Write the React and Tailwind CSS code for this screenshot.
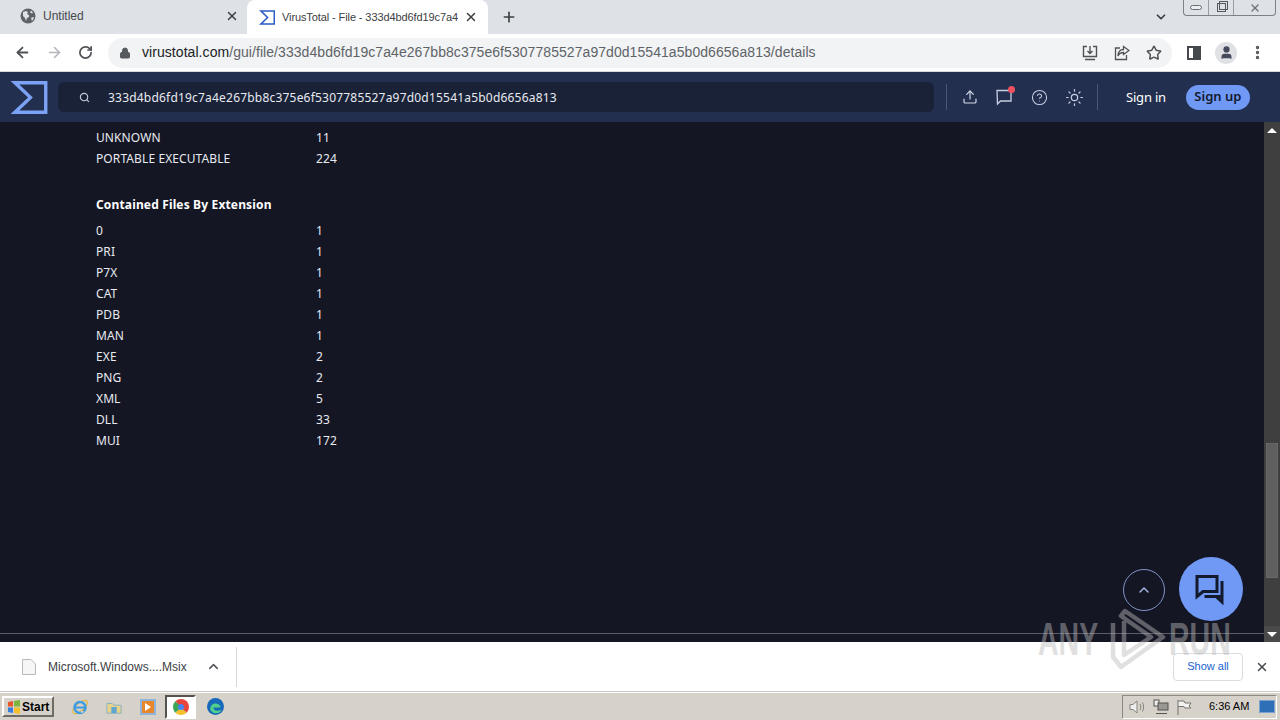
import { ArrowLeft, ArrowRight, RotateCw, Lock, Search, Upload, HelpCircle, Sun, ChevronUp, ChevronDown, X, Plus, Star, EllipsisVertical, User } from 'lucide-react'

const types = [['UNKNOWN', '11'], ['PORTABLE EXECUTABLE', '224']]
const extensions = [
  ['0', '1'], ['PRI', '1'], ['P7X', '1'], ['CAT', '1'], ['PDB', '1'], ['MAN', '1'],
  ['EXE', '2'], ['PNG', '2'], ['XML', '5'], ['DLL', '33'], ['MUI', '172'],
]

function Sigma({ className, color = '#7ba2f5' }) {
  return (
    <svg viewBox="0 0 38 34" className={className} fill={color}>
      <path fillRule="evenodd" d="M0 0H38V34H0L18 17zM9 3.500L23 17 9 30.500H34.500V3.500z" />
    </svg>
  )
}

function Row({ label, value }) {
  return (
    <div className="flex h-[21px] items-center text-[12px] tracking-[0.1px] text-[#e8eaf0]">
      <div className="w-[220px]">{label}</div>
      <div>{value}</div>
    </div>
  )
}

function TabBar() {
  return (
    <div className="relative flex h-[34px] items-end bg-[#dee1e6] pl-2 font-['Liberation_Sans',sans-serif] text-[12px] text-[#3c4043]">
      <div className="mb-[3px] flex h-[30px] w-[239px] items-center pl-3 pr-2">
        <svg viewBox="0 0 16 16" className="h-4 w-4">
          <circle cx="8" cy="8" r="7.500" fill="#5f6368" />
          <path d="M3 4l3-1 2 1-1 2 2 1v2l-2 1-1 3-1-3-2-2zM11 2.500l2 2-1 1-2-1zM11 10l2-1 1 1-2 3z" fill="#dee1e6" />
        </svg>
        <span className="ml-[7px] flex-1 text-[#45494d]">Untitled</span>
        <X className="h-[14px] w-[14px] text-[#3c4043]" strokeWidth={2.5} />
      </div>
      <div className="flex h-[34px] w-[241px] items-center rounded-t-lg bg-white pl-3">
        <Sigma className="h-[15px] w-[16px] shrink-0" color="#2a5bc8" />
        <span className="ml-[7px] w-[176px] overflow-hidden whitespace-nowrap text-[11px] tracking-[-0.1px] text-[#3c4043]">VirusTotal - File - 333d4bd6fd19c7a4</span>
        <X className="ml-[6px] h-[14px] w-[14px] shrink-0 text-[#3c4043]" strokeWidth={2.5} />
      </div>
      <Plus className="mb-[9px] ml-[13px] h-[16px] w-[16px] text-[#3c4043]" strokeWidth={2.5} />
      <ChevronDown className="absolute right-[112px] top-[10px] h-[14px] w-[14px] text-[#3c4043]" strokeWidth={3} />
      <div className="absolute right-[4px] top-0 flex h-[16px] w-[93px] rounded-b-[4px] border border-t-0 border-[#7d8087] bg-[#dee1e6]">
        <div className="flex w-[25px] items-center justify-center border-r border-[#9a9da3]">
          <div className="h-[5px] w-[12px] rounded-sm border border-[#6b6e73] bg-[#eceef1]" />
        </div>
        <div className="flex w-[25px] items-center justify-center border-r border-[#9a9da3]">
          <div className="relative h-[9px] w-[9px] border border-[#55585d]">
            <div className="absolute -right-[3px] -top-[3px] h-[9px] w-[9px] border border-[#55585d]" />
          </div>
        </div>
        <div className="flex flex-1 items-center justify-center">
          <X className="h-[12px] w-[12px] text-[#6b6e73]" strokeWidth={2.5} />
        </div>
      </div>
    </div>
  )
}

function Toolbar() {
  return (
    <div className="flex h-[38px] items-center border-b border-[#d5d7db] bg-white pl-[14px]">
      <ArrowLeft className="h-[17px] w-[17px] text-[#4f5256]" strokeWidth={2.5} />
      <ArrowRight className="ml-[15px] h-[17px] w-[17px] text-[#b4b6ba]" strokeWidth={2.25} />
      <RotateCw className="ml-[15px] h-[15px] w-[15px] text-[#4f5256]" strokeWidth={2.75} />
      <div className="ml-[15px] flex h-[30px] w-[1064px] items-center rounded-full bg-[#f1f3f4] pl-[11px] pr-[10px]">
        <Lock className="h-[12px] w-[12px] fill-[#55585d] text-[#55585d]" />
        <span className="ml-[11px] font-['Liberation_Sans',sans-serif] text-[14px] tracking-[0.06px] text-[#5f6368]">
          <span className="text-[#202124]">virustotal.com</span>/gui/file/333d4bd6fd19c7a4e267bb8c375e6f5307785527a97d0d15541a5b0d6656a813/details
        </span>
        <div className="ml-auto flex items-center gap-[16px] text-[#4f5256]">
          <svg viewBox="0 0 16 16" className="h-4 w-4" fill="none" stroke="currentColor" strokeWidth="1.4">
            <path d="M5 1.500H1.500v10h13v-10H11M8 1v7M5.500 6L8 8.500 10.500 6M3 14.500h10" />
          </svg>
          <svg viewBox="0 0 16 16" className="h-4 w-4" fill="none" stroke="currentColor" strokeWidth="1.3">
            <path d="M6 3H1.500v11.500h11V10M9.500 1.500L15 5.500 9.500 9.500V7.500C7 7.500 5 8.500 4 11c0-4 2-6.500 5.500-6.500z" />
          </svg>
          <Star className="h-4 w-4" strokeWidth={2.25} />
        </div>
      </div>
      <div className="ml-[15px] flex h-[14px] w-[14px] justify-end border-2 border-[#45484c] bg-white">
        <div className="h-full w-[6px] bg-[#45484c]" />
      </div>
      <div className="ml-[14px] flex h-[22px] w-[22px] items-center justify-center rounded-full bg-[#dfe1e5]">
        <User className="h-[15px] w-[15px] fill-[#45495c] text-[#45495c]" />
      </div>
      <EllipsisVertical className="ml-[12px] h-[17px] w-[17px] text-[#4f5256]" strokeWidth={2.75} />
    </div>
  )
}

function SiteHeader() {
  return (
    <div className="flex h-[50px] items-center bg-[#222f4f] pl-[10px] font-['Noto_Sans',sans-serif]">
      <Sigma className="h-[33px] w-[38px] shrink-0" />
      <div className="ml-[10px] flex h-[30px] w-[876px] items-center rounded-md bg-[#1a2238] pl-[21px]">
        <Search className="h-[11px] w-[11px] text-[#c4cbdb]" strokeWidth={2.5} />
        <span className="ml-[18px] mt-[2px] text-[12px] tracking-[0.2px] text-[#e8eaf0]">333d4bd6fd19c7a4e267bb8c375e6f5307785527a97d0d15541a5b0d6656a813</span>
      </div>
      <div className="ml-[12px] h-[26px] w-px bg-[#4a5877]" />
      <Upload className="ml-[15px] h-[16px] w-[16px] text-[#d5daea]" strokeWidth={1.75} />
      <div className="relative ml-[18px]">
        <svg viewBox="0 0 18 18" className="h-[18px] w-[18px]" fill="none" stroke="#c7cee0" strokeWidth="1.3">
          <path d="M1 2.500H15V13H4.500L1.500 16z" />
        </svg>
        <div className="absolute -right-[1px] -top-[2px] h-[7px] w-[7px] rounded-full bg-[#f05060]" />
      </div>
      <HelpCircle className="ml-[17px] h-[17px] w-[17px] text-[#c7cee0]" strokeWidth={1.5} />
      <Sun className="ml-[17px] h-[19px] w-[19px] text-[#c7cee0]" strokeWidth={1.5} />
      <div className="ml-[13px] h-[26px] w-px bg-[#4a5877]" />
      <span className="ml-[28px] mt-[2px] text-[13px] tracking-[-0.2px] text-white">Sign in</span>
      <div className="ml-[20px] flex h-[25px] w-[64px] items-center justify-center rounded-full bg-[#7099f5] text-[13px] font-semibold text-[#141a2e]">
        Sign up
      </div>
    </div>
  )
}

function Scrollbar() {
  return (
    <div className="flex w-[16px] shrink-0 flex-col bg-[#3f3f3f]">
      <div className="flex h-[16px] items-center justify-center">
        <div className="h-0 w-0 border-x-[5px] border-b-[5px] border-x-transparent border-b-white" />
      </div>
      <div className="mx-auto mt-[305px] h-[135px] w-[12px] border border-[#686868] bg-[#5f5f5f]" />
      <div className="mt-auto flex h-[16px] items-center justify-center bg-[#4a4a4a]">
        <div className="h-0 w-0 border-x-[5px] border-t-[5px] border-x-transparent border-t-white" />
      </div>
    </div>
  )
}

function Content() {
  return (
    <div className="relative flex min-h-0 flex-1 bg-[#141624] font-['Noto_Sans',sans-serif]">
      <div className="flex flex-1 flex-col">
        <div className="flex-1 pl-[96px] pt-[5px]">
          {types.map(([l, v]) => <Row key={l} label={l} value={v} />)}
          <div className="mb-[5px] mt-[25px] flex h-[21px] items-center text-[12px] font-bold tracking-[0.15px] text-white">Contained Files By Extension</div>
          {extensions.map(([l, v]) => <Row key={l} label={l} value={v} />)}
        </div>
        <div className="mb-[8px] h-px bg-[#5a5c66]" />
      </div>
      <Scrollbar />
      <div className="absolute left-[1123px] top-[447px] flex h-[42px] w-[42px] items-center justify-center rounded-full border border-[#7f95c8]">
        <ChevronUp className="h-[16px] w-[16px] text-[#a9bde8]" />
      </div>
      <div className="absolute left-[1179px] top-[435px] flex h-[64px] w-[64px] items-center justify-center rounded-full bg-[#7099f5]">
        <svg viewBox="0 0 32 32" className="h-[32px] w-[32px]" fill="none" stroke="#141a2e" strokeWidth="3">
          <path d="M2 3.500H22V18.500H8L2 23.500z" />
          <path d="M27 8V23.500H9.500M27 23V29L21 23.500" />
        </svg>
      </div>
    </div>
  )
}

function DownloadBar() {
  return (
    <div className="flex h-[50px] items-center border-b border-[#c9c9c9] bg-white pl-[22px] font-['Liberation_Sans',sans-serif]">
      <svg viewBox="0 0 14 16" className="h-[16px] w-[14px]" fill="#f6f6f6" stroke="#b8b8b8">
        <path d="M.5.500H9L13.500 5V15.500H.5z" />
      </svg>
      <span className="ml-[12px] text-[12px] text-[#3c4043]">Microsoft.Windows....Msix</span>
      <ChevronUp className="ml-[19px] h-[15px] w-[15px] text-[#55585d]" strokeWidth={2.5} />
      <div className="ml-[15px] h-[40px] w-px bg-[#d5d7db]" />
      <div className="ml-auto flex h-[28px] w-[70px] items-center justify-center rounded border border-[#dadce0] text-[11px] text-[#1a62d0]">Show all</div>
      <X className="mx-[11px] ml-[12px] h-[14px] w-[14px] text-[#45484c]" strokeWidth={2.5} />
    </div>
  )
}

function Taskbar() {
  return (
    <div className="flex h-[28px] items-center border-t border-white bg-[#d6d2ca] font-['Liberation_Sans',sans-serif]">
      <div className="ml-[2px] flex h-[21px] w-[52px] items-center border-2 border-b-[#6e6b65] border-l-white border-r-[#6e6b65] border-t-white pl-[3px] text-[12px] font-bold text-black">
        <svg viewBox="0 0 14 14" className="h-[14px] w-[14px] shrink-0">
          <path d="M1 2l5-1v5.500H1z" fill="#e8582c" />
          <path d="M7 1l6-1v6.500H7z" fill="#7cb53c" />
          <path d="M1 7.500h5V13l-5-1z" fill="#3a7de0" />
          <path d="M7 7.500h6V14l-6-1z" fill="#f5c02e" />
        </svg>
        <span className="ml-[1px]">Start</span>
      </div>
      <svg viewBox="0 0 18 18" className="ml-[17px] h-[18px] w-[18px]" fill="none">
        <ellipse cx="9" cy="9" rx="9" ry="4" transform="rotate(-40 9 9)" stroke="#e5b53c" strokeWidth="1.2" />
        <circle cx="9" cy="9.500" r="5.500" stroke="#3f9ce0" strokeWidth="2.500" />
        <path d="M4 9.500h10" stroke="#3f9ce0" strokeWidth="2" />
        <path d="M10 12.500l4 1.500-4 1z" fill="#d6d2ca" />
      </svg>
      <svg viewBox="0 0 18 16" className="ml-[17px] h-[16px] w-[16px]">
        <path d="M1 4h6l2 2h8v9H1z" fill="#e7d28a" stroke="#7fb0c8" />
        <rect x="6" y="8" width="6" height="7" fill="#5ea5cf" />
      </svg>
      <div className="ml-[18px] flex h-[16px] w-[16px] items-center justify-center border-2 border-[#8fb4dc] bg-[#e8862a]">
        <div className="h-0 w-0 border-y-[4px] border-l-[6px] border-y-transparent border-l-white" />
      </div>
      <div className="ml-[9px] flex h-[24px] w-[31px] items-center justify-center border-2 border-b-white border-l-[#55534e] border-r-white border-t-[#55534e] bg-white">
        <div className="h-[16px] w-[16px] rounded-full border-[5px] border-b-[#f5c02e] border-l-[#3aa757] border-r-[#e8453c] border-t-[#e8453c] bg-[#4285f4]" />
      </div>
      <svg viewBox="0 0 16 16" className="ml-[11px] h-[17px] w-[17px]">
        <circle cx="8" cy="8" r="8" fill="#1668b8" />
        <path d="M3 11c0-5 4-7 8-5 2 1 2 3 1 3H6c0 3 4 4 8 2-2 4-8 5-11 0z" fill="#4fd08c" />
      </svg>
      <div className="ml-auto mr-[3px] flex h-[24px] w-[155px] items-center border border-b-white border-l-[#8b8882] border-r-white border-t-[#8b8882] pl-[6px]">
        <svg viewBox="0 0 16 16" className="h-[16px] w-[16px]" fill="#eeeeee" stroke="#85837e">
          <path d="M1 5.500h3L8 2v12L4 10.500H1z" />
          <path d="M11 5c1 2 1 4 0 6M13.500 3.500c1.500 3 1.500 6 0 9" fill="none" />
        </svg>
        <svg viewBox="0 0 16 16" className="ml-[8px] h-[16px] w-[16px]" fill="#ececec" stroke="#55534e">
          <rect x="1" y="1" width="5" height="6" />
          <rect x="5" y="4" width="10" height="7" fill="#9a9893" />
          <path d="M3 14.500h11" />
        </svg>
        <svg viewBox="0 0 16 16" className="ml-[7px] h-[16px] w-[16px]" fill="#f2f2f2" stroke="#75736e">
          <path d="M2 1v15M2 2h6l1 2h6l-2 3 2 2H9L8 7.500H2" />
        </svg>
        <span className="ml-[17px] text-[11px] text-black">6:36 AM</span>
        <div className="ml-auto mr-[1px] h-[13px] w-[16px] border border-[#7ba3cf] bg-[#2f6fb8]" />
      </div>
    </div>
  )
}

function Watermark() {
  return (
    <div className="pointer-events-none absolute left-[1038px] top-[607px] flex items-center font-['Liberation_Sans',sans-serif] text-[46px] font-bold leading-none text-[#bbbbbb] opacity-45">
      <span className="w-[69px] origin-left scale-x-[.62]">ANY</span>
      <svg viewBox="0 0 62 64" className="h-[64px] w-[62px]" fill="none" stroke="#bbbbbb" strokeWidth="4.500" strokeLinejoin="round">
        <path d="M6 16V50L14 60 56 30 18 4 14 9 44 30 17 48V14" />
      </svg>
      <span className="w-[70px] origin-left scale-x-[.62]">RUN</span>
    </div>
  )
}

export default function App() {
  return (
    <div className="relative flex h-[720px] w-[1280px] flex-col overflow-hidden">
      <TabBar />
      <Toolbar />
      <SiteHeader />
      <Content />
      <DownloadBar />
      <Taskbar />
      <Watermark />
    </div>
  )
}
